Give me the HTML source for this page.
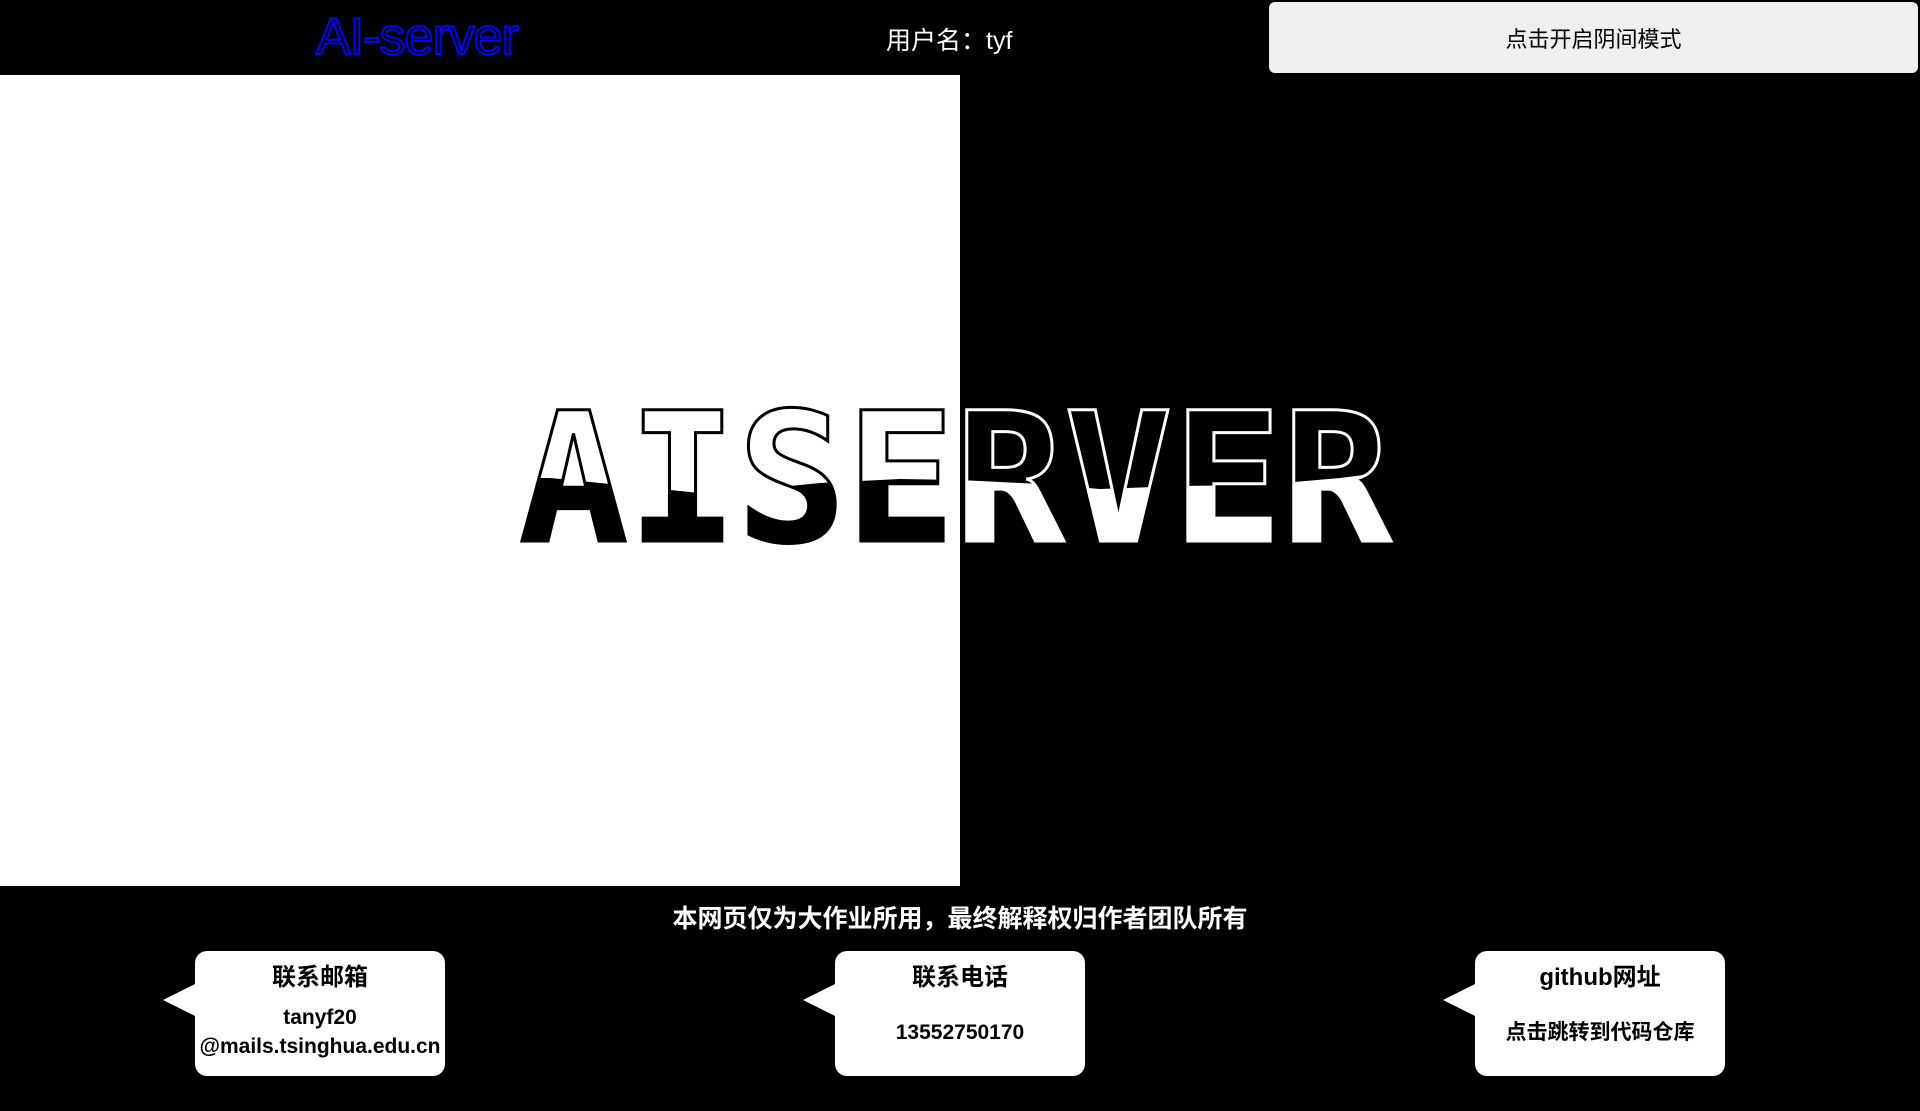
<!DOCTYPE html>
<html><head><meta charset="utf-8"><style>
*{margin:0;padding:0;box-sizing:border-box}
body{width:1920px;height:1111px;background:#000;overflow:hidden;position:relative;font-family:"Liberation Sans","Noto Sans CJK SC",sans-serif}
.title{position:absolute;left:316px;top:7px;font-size:52px;color:#000;-webkit-text-stroke:2px #0000ff;letter-spacing:-1px}
.user{position:absolute;left:886px;top:21px;font-size:25px;color:#fff}
.btn{position:absolute;left:1269px;top:2px;width:649px;height:71px;background:#efefef;border-radius:6px;text-align:center;line-height:75px;font-size:22px;color:#000}
.white{position:absolute;left:0;top:75px;width:960px;height:811px;background:#fff}
svg.big{position:absolute;left:0;top:0}
.foot{position:absolute;left:0;width:1920px;top:899px;text-align:center;color:#fff;font-weight:bold;font-size:25px}
.card{position:absolute;top:951px;width:250px;height:125px;background:#fff;border-radius:12px;text-align:center;font-weight:bold;color:#000}
.card:before{content:"";position:absolute;left:-32px;top:33px;border-right:32px solid #fff;border-top:16px solid transparent;border-bottom:16px solid transparent}
.card h3{font-size:24px;margin-top:12px;line-height:30px}
.card p{font-size:21px;line-height:29px}
</style></head><body>
<div class="title">AI-server</div>
<div class="user">用户名：tyf</div>
<div class="btn">点击开启阴间模式</div>
<div class="white"></div>
<svg class="big" width="1920" height="1111">
<defs>
<clipPath id="L"><rect x="0" y="0" width="960" height="1111"/></clipPath>
<clipPath id="R"><rect x="960" y="0" width="960" height="1111"/></clipPath>
<clipPath id="W"><path d="M0 476 L550 478 L620 485 L700 493 L760 489 L820 483 L900 479 L960 480 L1040 484 L1100 489 L1180 486 L1260 485 L1340 478 L1420 468 L1920 468 L1920 1111 L0 1111Z"/></clipPath>
</defs>
<g font-family="DejaVu Sans Mono" font-weight="bold" font-size="180" text-anchor="middle">
<g clip-path="url(#L)">
<text x="955" y="541" textLength="872" lengthAdjust="spacingAndGlyphs" fill="none" stroke="#000" stroke-width="3">AISERVER</text>
<text x="955" y="541" textLength="872" lengthAdjust="spacingAndGlyphs" fill="#000" clip-path="url(#W)">AISERVER</text>
</g>
<g clip-path="url(#R)">
<text x="955" y="541" textLength="872" lengthAdjust="spacingAndGlyphs" fill="none" stroke="#fff" stroke-width="3">AISERVER</text>
<text x="955" y="541" textLength="872" lengthAdjust="spacingAndGlyphs" fill="#fff" clip-path="url(#W)">AISERVER</text>
</g>
</g>
</svg>
<div class="foot">本网页仅为大作业所用，最终解释权归作者团队所有</div>
<div class="card" style="left:195px"><h3>联系邮箱</h3><p style="margin-top:10px">tanyf20<br>@mails.tsinghua.edu.cn</p></div>
<div class="card" style="left:835px"><h3>联系电话</h3><p style="margin-top:25px">13552750170</p></div>
<div class="card" style="left:1475px"><h3>github网址</h3><p style="margin-top:25px">点击跳转到代码仓库</p></div>
</body></html>
